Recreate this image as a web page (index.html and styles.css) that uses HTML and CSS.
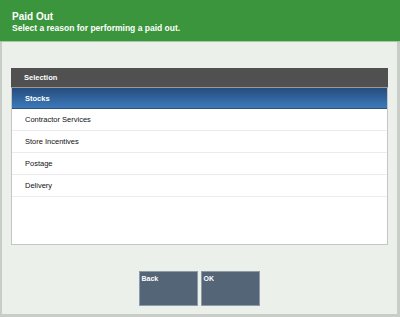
FILE: index.html
```html
<!DOCTYPE html>
<html lang="en">

<head>
    <meta charset="UTF-8">
    <title>Paid Out</title>
    <link rel="stylesheet" href="styles.css">
</head>

<body>
    <div id="frame">
        <div id="header">
            <div class="title">Paid Out</div>
            <div class="subtitle">Select a reason for performing a paid out.</div>
        </div>
        <div id="content">
            <div id="list">
                <div class="list-head">Selection</div>
                <div class="row selected">Stocks</div>
                <div class="row">Contractor Services</div>
                <div class="row">Store Incentives</div>
                <div class="row">Postage</div>
                <div class="row">Delivery</div>
            </div>
            <div id="buttons">
                <div class="btn">Back</div>
                <div class="btn">OK</div>
            </div>
        </div>
    </div>
</body>

</html>
```
FILE: styles.css
```css
body {
    margin: 0;
    font-family: "Liberation Sans", Arial, sans-serif;
    background-color: #ebf1ea;
}

#frame {
    width: 400px;
    height: 317px;
    box-sizing: border-box;
    border-left: 2px solid #c9cdc8;
    border-right: 3px solid #c9cdc8;
    border-bottom: 3px solid #c9cdc8;
    display: flex;
    flex-direction: column;
}

#header {
    background-color: #3a953c;
    color: #fff;
    height: 42px;
    box-sizing: border-box;
    padding: 11px 0 0 12px;
    border-bottom: 1px solid #a6c7a4;
    margin-left: -2px;
    margin-right: -3px;
}

.title {
    font-size: 10px;
    font-weight: bold;
    line-height: 12px;
}

.subtitle {
    font-size: 8.5px;
    font-weight: bold;
    line-height: 11px;
}

#content {
    padding: 26px 8px 0 9px;
}

#list {
    height: 176px;
    background-color: #fff;
    border: 1px solid #c3c6c3;
    border-top: none;
    margin-right: 1px;
}

.list-head {
    background-color: #505050;
    color: #fff;
    font-size: 7.5px;
    font-weight: bold;
    height: 19px;
    line-height: 19px;
    padding-left: 13px;
    border-bottom: 1px solid #9a9a9a;
    margin: 0 -1px 0 -1px;
}

.row {
    height: 21px;
    line-height: 21px;
    font-size: 7.5px;
    color: #111;
    padding-left: 13px;
    border-bottom: 1px solid #ececec;
}

.row.selected {
    background: linear-gradient(#264c7d, #3c7abb);
    color: #fff;
    font-weight: bold;
    border-bottom: 1px solid #2d4f78;
    height: 20px;
}

#buttons {
    display: flex;
    justify-content: center;
    gap: 3px;
    margin-top: 26px;
    margin-right: 2px;
}

.btn {
    width: 55px;
    height: 30px;
    background-color: #546578;
    border: 1px solid #8d9aa7;
    color: #fff;
    font-size: 7px;
    font-weight: bold;
    padding: 3px 0 0 2px;
}
```
